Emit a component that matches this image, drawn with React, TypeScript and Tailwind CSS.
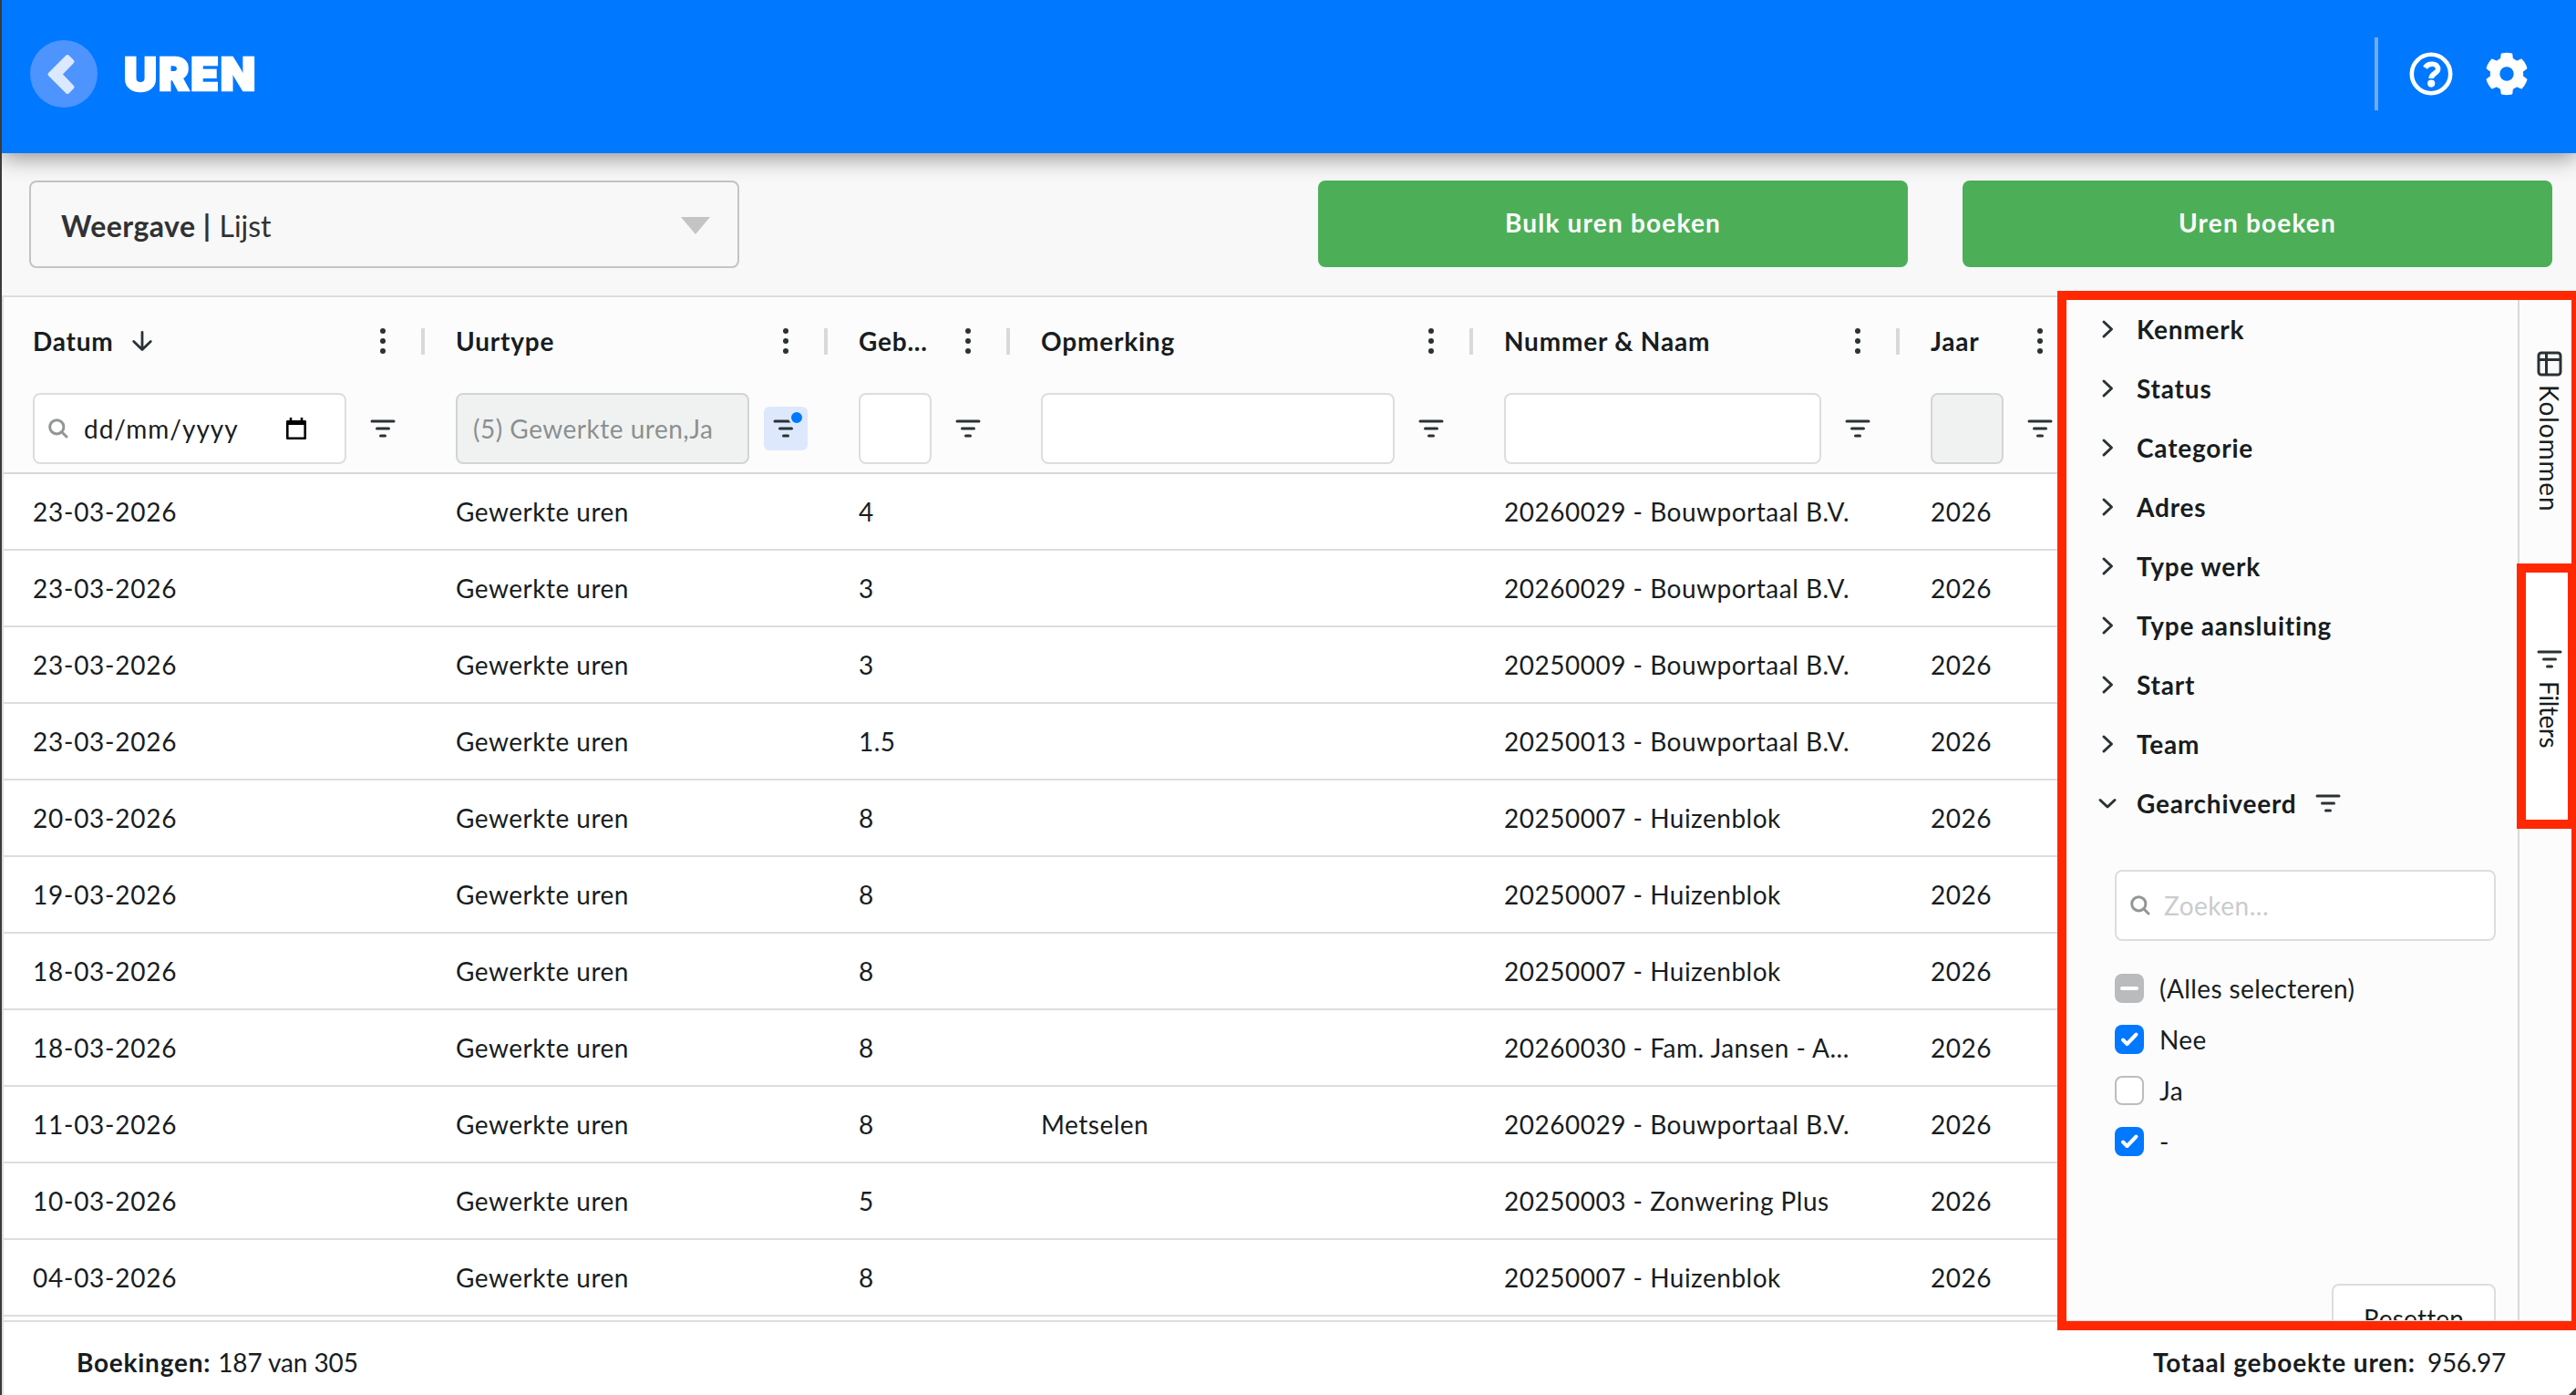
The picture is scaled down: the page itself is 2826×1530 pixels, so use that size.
import type { ReactNode } from 'react'

const rows = [
  { date: '23-03-2026', hours: '4', note: '', project: '20260029 - Bouwportaal B.V.' },
  { date: '23-03-2026', hours: '3', note: '', project: '20260029 - Bouwportaal B.V.' },
  { date: '23-03-2026', hours: '3', note: '', project: '20250009 - Bouwportaal B.V.' },
  { date: '23-03-2026', hours: '1.5', note: '', project: '20250013 - Bouwportaal B.V.' },
  { date: '20-03-2026', hours: '8', note: '', project: '20250007 - Huizenblok' },
  { date: '19-03-2026', hours: '8', note: '', project: '20250007 - Huizenblok' },
  { date: '18-03-2026', hours: '8', note: '', project: '20250007 - Huizenblok' },
  { date: '18-03-2026', hours: '8', note: '', project: '20260030 - Fam. Jansen - A...' },
  { date: '11-03-2026', hours: '8', note: 'Metselen', project: '20260029 - Bouwportaal B.V.' },
  { date: '10-03-2026', hours: '5', note: '', project: '20250003 - Zonwering Plus' },
  { date: '04-03-2026', hours: '8', note: '', project: '20250007 - Huizenblok' },
]

const columns = [
  { title: 'Datum', width: 'w-[460px] pl-8' },
  { title: 'Uurtype', width: 'w-[442px] pl-9' },
  { title: 'Geb...', width: 'w-[200px] pl-9' },
  { title: 'Opmerking', width: 'w-[508px] pl-9' },
  { title: 'Nummer & Naam', width: 'w-[468px] pl-9' },
  { title: 'Jaar', width: 'w-[200px] pl-9' },
]

const groups = ['Kenmerk', 'Status', 'Categorie', 'Adres', 'Type werk', 'Type aansluiting', 'Start', 'Team']

function FilterIcon() {
  return (
    <svg className="h-5 w-7 shrink-0" viewBox="0 0 28 20" stroke="#2b3234" strokeWidth="3" strokeLinecap="round">
      <path d="M2 2h24M7.5 10h13M11.5 18h5" />
    </svg>
  )
}

function SearchIcon() {
  return (
    <svg className="h-[22px] w-[22px] shrink-0" viewBox="0 0 22 22" fill="none" stroke="#939697" strokeWidth="3" strokeLinecap="round">
      <circle cx="9.3" cy="9.3" r="7.6" />
      <path d="M15 15l5 5" />
    </svg>
  )
}

function Dots() {
  return (
    <svg className="h-7 w-12 shrink-0" viewBox="0 0 48 28" fill="#2b3234">
      <circle cx="24" cy="3" r="3" />
      <circle cx="24" cy="14" r="3" />
      <circle cx="24" cy="25" r="3" />
    </svg>
  )
}

function Chevron({ open = false }: { open?: boolean }) {
  return (
    <svg className="h-6 w-6 shrink-0" viewBox="0 0 24 24" fill="none" stroke="#2b3234" strokeWidth="3" strokeLinecap="round" strokeLinejoin="round">
      <path d={open ? 'M4 8.5l8 7.5 8-7.5' : 'M8 4l8.5 8-8.5 8'} />
    </svg>
  )
}

function Checkbox({ state }: { state: 'on' | 'off' | 'mixed' }) {
  if (state === 'off') return <span className="h-8 w-8 rounded-lg border-2 border-[#bbbdbe] bg-white" />
  return (
    <svg className={`h-8 w-8 rounded-lg ${state === 'on' ? 'bg-[#0078ff]' : 'bg-[#b9bbbc]'}`} viewBox="0 0 32 32" fill="none" stroke="#fff" strokeWidth="4" strokeLinecap="round" strokeLinejoin="round">
      <path d={state === 'on' ? 'M9 16.500l4.500 4.500 10-10.500' : 'M8 16h16'} />
    </svg>
  )
}

function Input({ disabled = false, children }: { disabled?: boolean; children?: ReactNode }) {
  return (
    <div className={`flex h-[78px] min-w-0 flex-1 items-center rounded-lg border-2 ${disabled ? 'border-[#d3d5d5] bg-[#f0f2f1]' : 'border-[#dddddd] bg-white'}`}>
      {children}
    </div>
  )
}

function Header() {
  return (
    <header className="relative z-10 flex h-[168px] shrink-0 items-center bg-[#0078ff] pr-[52px] pb-1.5 pl-[31px] shadow-[0_4px_24px_rgba(0,0,0,0.45)]">
      <svg className="h-[74px] w-[74px]" viewBox="0 0 74 74">
        <circle cx="37" cy="37" r="37" fill="#4d94ff" />
        <path d="M41 18l5.500 5.500L33 37.500l13.500 14-5.500 5.500L21.500 37.500z" fill="#dbe9ff" stroke="#dbe9ff" strokeWidth="4" strokeLinejoin="round" />
      </svg>
      <h1 className="ml-[29px] font-['Inter'] text-[50px] leading-none font-black tracking-[1.9px] text-white [-webkit-text-stroke:2.5px_white]">UREN</h1>
      <div className="ml-auto h-20 w-1 bg-[#73aaff]" />
      <svg className="ml-[34px] h-12 w-12" viewBox="-24 -24 48 48" fill="none" stroke="#fff">
        <circle r="21.2" strokeWidth="4.6" />
        <path d="M-6.500-6.800C-3-12.500 7.800-12.200 7.600-5 7.400-.500.200-.600.200 5" strokeWidth="5.600" />
        <circle cx=".2" cy="10.600" r="4.100" fill="#fff" stroke="none" />
      </svg>
      <svg className="ml-[35px] h-12 w-12" viewBox="-24 -24 48 48">
        <mask id="gear-hole">
          <circle r="23.300" fill="#fff" />
          <circle r="7.700" fill="#000" />
        </mask>
        <g fill="#fff" mask="url(#gear-hole)">
          <circle r="18.200" />
          {[0, 60, 120].map((a) => (
            <path key={a} d="M-6-24H6L7.500-12V12L6 24H-6L-7.500 12V-12z" transform={`rotate(${a})`} />
          ))}
        </g>
      </svg>
    </header>
  )
}

function Toolbar() {
  return (
    <div className="flex h-[156px] shrink-0 items-start bg-[#f8f8f8] pt-[30px] pr-[26px] pl-[30px]">
      <div className="flex h-24 w-[779px] items-center rounded-lg border-2 border-[#c4c4c4] pt-[3px] pr-[30px] pl-[33px] text-[32px] text-[#303234]">
        <b className="tracking-[0.45px]">Weergave |</b>
        <span className="ml-[9px]">Lijst</span>
        <span className="ml-auto h-[19px] w-8 bg-[#c4c4c4] [clip-path:polygon(0_0,100%_0,50%_100%)]" />
      </div>
      <button className="ml-auto h-[95px] w-[647px] rounded-lg bg-[#4caf58] pb-[3px] font-bold tracking-[1.2px] text-white">Bulk uren boeken</button>
      <button className="ml-[60px] h-[95px] w-[647px] rounded-lg bg-[#4caf58] pb-[3px] font-bold tracking-[1.2px] text-white">Uren boeken</button>
    </div>
  )
}

function ColumnFilter({ title }: { title: string }) {
  if (title === 'Datum') {
    return (
      <Input>
        <div className="flex w-full items-center pr-[42px] pl-[15px]">
          <SearchIcon />
          <span className="ml-[17px] tracking-[1px]">dd/mm/yyyy</span>
          <svg className="ml-auto h-6 w-[22px]" viewBox="0 0 22 24" fill="none" stroke="#000">
            <path d="M1.300 4.200h19.400v18.500H1.300z" strokeWidth="2.600" strokeLinejoin="round" />
            <path d="M1 5.500h20" strokeWidth="5" />
            <path d="M5 0v5M17 0v5" strokeWidth="2.600" />
          </svg>
        </div>
      </Input>
    )
  }
  if (title === 'Uurtype') {
    return (
      <Input disabled>
        <span className="pl-[17px] tracking-[0.5px] whitespace-nowrap text-[#8b9091]">(5) Gewerkte uren,Ja</span>
      </Input>
    )
  }
  return <Input disabled={title === 'Jaar'} />
}

function Grid() {
  return (
    <div className="flex-1 overflow-hidden bg-white">
      <div className="w-[2278px]">
        <div className="border-b-2 border-[#d8d8d8] bg-[#fcfcfc]">
          <div className="flex h-[95px]">
            {columns.map((c) => (
              <div key={c.title} className={`relative flex items-center pr-5 ${c.width}`}>
                <b className="tracking-[0.8px] whitespace-nowrap">{c.title}</b>
                {c.title === 'Datum' && (
                  <svg className="ml-[19px] h-6 w-6" viewBox="0 0 24 24" fill="none" stroke="#2b3234" strokeWidth="2.800" strokeLinecap="round" strokeLinejoin="round">
                    <path d="M12 2.500v19M2.700 12.500l9.300 9 9.300-9" />
                  </svg>
                )}
                <div className="ml-auto flex">
                  <Dots />
                </div>
                <span className="absolute top-[34px] -right-0.5 h-[29px] w-1 bg-[#d9d9d9]" />
              </div>
            ))}
          </div>
          <div className="flex h-[97px]">
            {columns.map((c) => (
              <div key={c.title} className={`flex items-center gap-4 pr-5 ${c.width}`}>
                <ColumnFilter title={c.title} />
                <div className={`relative flex h-12 w-12 shrink-0 items-center justify-center rounded-md ${c.title === 'Uurtype' ? 'bg-[#dde8fc]' : ''}`}>
                  <FilterIcon />
                  {c.title === 'Uurtype' && (
                    <span className="absolute top-[3px] right-[3px] h-[18px] w-[18px] rounded-full border-[3px] border-[#dde8fc] bg-[#0078ff]" />
                  )}
                </div>
              </div>
            ))}
          </div>
        </div>
        {rows.map((r, i) => (
          <div key={i} className="flex h-[84px] items-center border-b-2 border-[#dddddd] tracking-[0.5px] whitespace-nowrap">
            <div className="w-[460px] pl-8 tracking-[0.75px]">{r.date}</div>
            <div className="w-[442px] pl-9">Gewerkte uren</div>
            <div className="w-[200px] pl-9">{r.hours}</div>
            <div className="w-[508px] pl-9">{r.note}</div>
            <div className="w-[468px] pl-9">{r.project}</div>
            <div className="w-[200px] pl-9">2026</div>
          </div>
        ))}
      </div>
    </div>
  )
}

function FilterPanel() {
  return (
    <aside className="w-[505px] shrink-0 overflow-hidden bg-[#fcfcfc] pt-0.5 pl-[43px]">
      {groups.map((g) => (
        <div key={g} className="flex h-[65px] items-center gap-5">
          <Chevron />
          <b className="tracking-[0.8px]">{g}</b>
        </div>
      ))}
      <div className="flex h-[65px] items-center gap-5">
        <Chevron open />
        <b className="tracking-[0.8px]">Gearchiveerd</b>
        <FilterIcon />
      </div>
      <div className="mt-[41px] mr-6 ml-5">
        <div className="flex h-[78px] items-center rounded-lg border-2 border-[#dddddd] bg-white pl-[15px]">
          <SearchIcon />
          <span className="ml-[15px] tracking-[0.5px] text-[#c9cccd]">Zoeken...</span>
        </div>
        <div className="mt-9 flex flex-col gap-6 tracking-[0.4px]">
          <div className="flex h-8 items-center gap-[17px]"><Checkbox state="mixed" />(Alles selecteren)</div>
          <div className="flex h-8 items-center gap-[17px]"><Checkbox state="on" />Nee</div>
          <div className="flex h-8 items-center gap-[17px]"><Checkbox state="off" />Ja</div>
          <div className="flex h-8 items-center gap-[17px]"><Checkbox state="on" />-</div>
        </div>
        <button className="mt-[140px] ml-auto block h-[78px] w-[180px] rounded-lg border-2 border-[#dddddd] bg-white pb-0.5 tracking-[0.2px]">Resetten</button>
      </div>
    </aside>
  )
}

function SideTabs() {
  return (
    <nav className="flex w-16 shrink-0 flex-col border-l-2 border-[#d8d8d8] bg-[#fcfcfc]">
      <div className="flex h-[294px] flex-col items-center justify-center gap-[9px] pl-[3px]">
        <svg className="h-7 w-7 shrink-0" viewBox="0 0 28 28" fill="none" stroke="#2b3234" strokeWidth="3">
          <rect x="2" y="2" width="24" height="24" rx="3" />
          <path d="M2 9.500h24M10.500 2v24" />
        </svg>
        <span className="tracking-[0.9px] [writing-mode:vertical-rl]">Kolommen</span>
      </div>
      <div className="flex h-[287px] flex-col items-center justify-center gap-[14px] bg-white pt-1.5 pl-[3px]">
        <FilterIcon />
        <span className="tracking-[-0.4px] [writing-mode:vertical-rl]">Filters</span>
      </div>
    </nav>
  )
}

export default function App() {
  return (
    <div className="relative flex h-[1530px] w-[2826px] flex-col overflow-hidden border-l-2 border-[#3a3a3a] bg-white font-['Lato',sans-serif] text-[28px] leading-[34px] text-[#181d1f]">
      <Header />
      <Toolbar />
      <main className="flex h-[1126px] shrink-0 border-y-2 border-l-2 border-[#dddddd]">
        <Grid />
        <FilterPanel />
        <SideTabs />
      </main>
      <footer className="flex flex-1 items-center border-l-2 border-[#dddddd] pt-[13px] pr-[77px] pb-[5px] pl-20">
        <b className="tracking-[0.75px]">Boekingen:</b>
        <span className="ml-2 tracking-[-0.1px]">187 van 305</span>
        <b className="ml-auto tracking-[0.9px]">Totaal geboekte uren:</b>
        <span className="ml-[13px] tracking-[-0.3px]">956.97</span>
      </footer>

      {/* highlight frames */}
      <div className="absolute top-[319px] left-[2255px] z-20 h-[1140px] w-[574px] border-[10px] border-[#ff2800]" />
      <div className="absolute top-[618px] left-[2759px] z-20 h-[291px] w-[66px] border-[10px] border-[#ff2800]" />
      <div className="absolute right-0 bottom-0 h-2 w-2 bg-[#3a3a3a] [clip-path:polygon(100%_0,100%_100%,0_100%)]" />
    </div>
  )
}
